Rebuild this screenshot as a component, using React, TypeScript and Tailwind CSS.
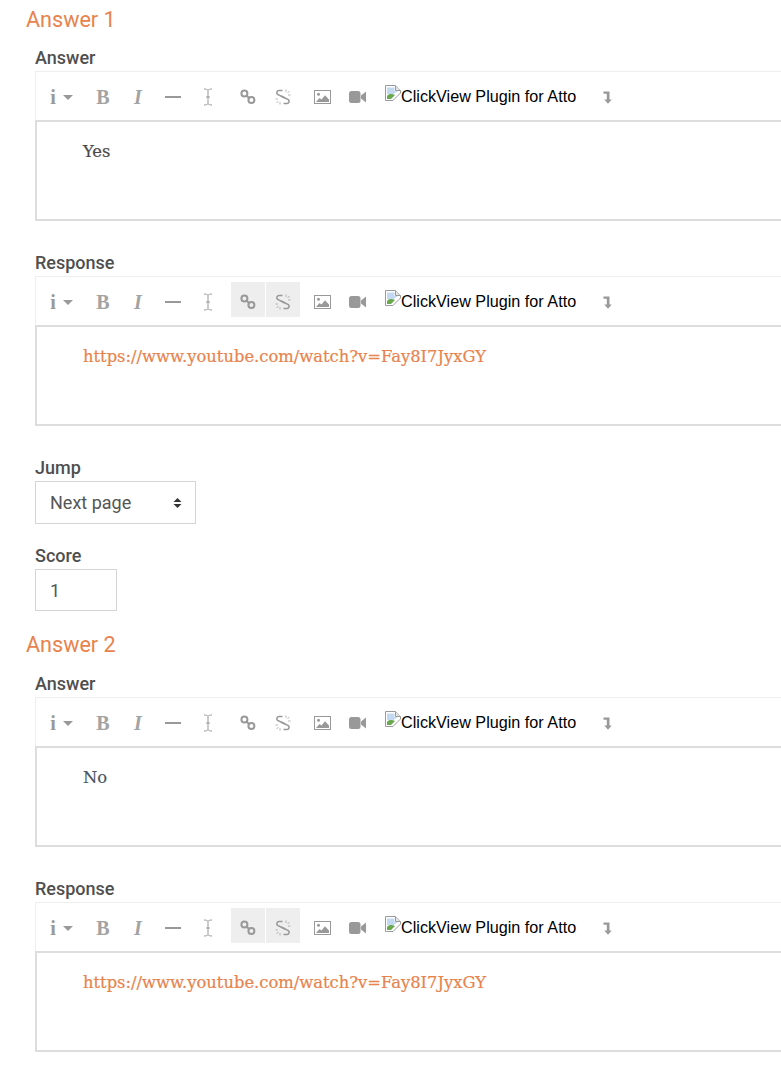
import React from 'react';

const orange = 'text-[#e8834d]';
const labelCls = 'text-[18px] font-medium leading-[20px] text-[#4f4f4f]';

const Btn = ({ active, children }: { active?: boolean; children: React.ReactNode }) => (
  <div className={`flex h-[35px] w-[34px] mr-px items-center justify-center pt-[5px] ${active ? 'bg-[#eeeeee]' : ''}`}>
    {children}
  </div>
);

const LinkIcon = () => (
  <svg width="16" height="16" viewBox="0 0 16 16" fill="none" stroke="#999999" strokeWidth="2">
    <circle cx="4.400" cy="4.600" r="3" />
    <circle cx="11.400" cy="11" r="3" />
    <path d="M6 6.200l3.800 3.400" />
  </svg>
);

const UnlinkIcon = () => (
  <svg width="16" height="16" viewBox="0 0 16 16" fill="none" stroke="#999999" strokeWidth="1.600">
    <path d="M7.500 1.500H4a2.200 2.200 0 0 0-1.400 3.900L10 9" />
    <path d="M6 7l7.300 3.600a2.200 2.200 0 0 1-1.300 3.900H8.500" />
    <path d="M11 0.500v2.500M14.500 2l-2 2M15.500 6h-2.500M0.500 10h2.500M1.500 14l2-2M5 15.500v-2.500" strokeWidth="0.700" />
  </svg>
);

const ImageIcon = () => (
  <svg width="17" height="14" viewBox="0 0 17 14">
    <rect x="0.500" y="0.500" width="16" height="13" fill="#ffffff" stroke="#999999" />
    <circle cx="4.500" cy="4.200" r="1.500" fill="#999999" />
    <path d="M2 12l3.500-4 2 1.600L11 5.200l4 4.400V12z" fill="#999999" />
  </svg>
);

const VideoIcon = () => (
  <svg width="17" height="12" viewBox="0 0 17 12" fill="#999999">
    <rect x="0" y="0" width="11.500" height="12" rx="2.500" />
    <path d="M12 4.500L17 0.500v11L12 7.500z" />
  </svg>
);

const CursorIcon = () => (
  <svg width="10" height="18" viewBox="0 0 10 18" fill="none" stroke="#999999" strokeWidth="1">
    <path d="M1 1c2 0 3.200.4 4 1.400C5.800 1.400 7 1 9 1M5 2.400v13.200M1 17c2 0 3.200-.4 4-1.400.8 1 2 1.400 4 1.400M3 9h4" />
  </svg>
);

const ArrowIcon = () => (
  <svg width="9" height="13" viewBox="0 0 9 13" fill="#999999">
    <path d="M0.500 0.500H6.500V8.500H8.700L5 12.800L1.300 8.500H3.800V2.700H0.500z" />
  </svg>
);

const BrokenImage = () => (
  <svg width="16" height="16" viewBox="0 0 16 16" className="shrink-0 self-start">
    <path d="M0.500 0.500H10.500L15.500 5.500V8L8 15.500H0.500z" fill="#ffffff" stroke="#9a9a9a" />
    <path d="M10.500 0.500V5.500H15.500" fill="#e4e4e4" stroke="#9a9a9a" />
    <path d="M2 2.500H9.500V6H13L7 10L2 9z" fill="#c3d9f2" />
    <path d="M2 14V11C4 8.500 7 8.500 10 10L6 14z" fill="#6aa84f" />
  </svg>
);

const Toolbar = ({ activeLinks }: { activeLinks?: boolean }) => (
  <div className="flex h-[49px] items-start border border-b-0 border-r-0 border-[#eeeeee] pl-[5px] pt-[5px]">
    <div className="mr-[5px] flex h-[35px] w-[40px] items-center justify-center gap-[7px] pl-[1px] pt-[5px] text-[#999999]">
      <span className="font-['Liberation_Serif',serif] text-[20px] font-bold leading-none">i</span>
      <span className="h-0 w-0 border-x-[5px] border-t-[5px] border-x-transparent border-t-[#999999]" />
    </div>
    <div className="mr-[5px] flex">
      <Btn>
        <span className="font-['Liberation_Serif',serif] text-[20px] font-bold leading-none text-[#a3a3a3]">B</span>
      </Btn>
      <Btn>
        <span className="font-['Liberation_Serif',serif] text-[20px] font-bold italic leading-none text-[#a3a3a3]">I</span>
      </Btn>
      <Btn>
        <span className="h-[2px] w-[16px] bg-[#999999]" />
      </Btn>
      <Btn>
        <CursorIcon />
      </Btn>
    </div>
    <div className="mr-[4px] flex">
      <Btn active={activeLinks}>
        <LinkIcon />
      </Btn>
      <Btn active={activeLinks}>
        <UnlinkIcon />
      </Btn>
    </div>
    <div className="mr-[10px] flex">
      <Btn>
        <ImageIcon />
      </Btn>
      <Btn>
        <VideoIcon />
      </Btn>
    </div>
    <div className="mt-[8px] flex h-[22px] w-[205px] items-center font-['Liberation_Sans',sans-serif] text-[16.2px] text-black">
      <BrokenImage />
      <span className="whitespace-nowrap">ClickView Plugin for Atto</span>
    </div>
    <Btn>
      <ArrowIcon />
    </Btn>
  </div>
);

const Editor = ({ label, activeLinks, children }: { label: string; activeLinks?: boolean; children: React.ReactNode }) => (
  <div className="w-[760px]">
    <div className={`h-[23px] ${labelCls}`}>{label}</div>
    <Toolbar activeLinks={activeLinks} />
    <div className="h-[101px] border-2 border-r-0 border-[#dddddd] pl-[46px] pt-[18px] font-['DejaVu_Serif',serif] text-[16.35px] leading-[24px] [-webkit-text-stroke:0.2px]">
      {children}
    </div>
  </div>
);

const Url = () => <span className={orange}>https://www.youtube.com/watch?v=Fay8I7JyxGY</span>;

const AnswerBlock = ({ n, headCls, text, textColor, children }: { n: number; headCls: string; text: string; textColor: string; children?: React.ReactNode }) => (
  <div>
    <h3 className={`-ml-[9px] text-[21.6px] leading-[26px] ${headCls} ${orange}`}>Answer {n}</h3>
    <Editor label="Answer">
      <span className={textColor}>{text}</span>
    </Editor>
    <div className="mt-[32px]">
      <Editor label="Response" activeLinks>
        <Url />
      </Editor>
    </div>
    {children}
  </div>
);

export default function App() {
  return (
    <div className="h-[1070px] w-[781px] overflow-hidden bg-white pl-[35px] pt-[7px] font-['Roboto',sans-serif]">
      <AnswerBlock n={1} headCls="h-[41px]" text="Yes" textColor="text-[#4a4a4a]">
        <div className={`mt-[32px] h-[23px] ${labelCls}`}>Jump</div>
        <div className="flex h-[43px] w-[161px] items-center justify-between border border-[#d5d5d5] pl-[14px] pr-[13px] text-[18px] text-[#555555]">
          <span>Next page</span>
          <svg width="9" height="12" viewBox="0 0 9 12" fill="#333333">
            <path d="M4.500 1L8.500 5H0.500zM4.500 11L0.500 7H8.500z" />
          </svg>
        </div>
        <div className={`mt-[22px] h-[23px] ${labelCls}`}>Score</div>
        <div className="flex h-[42px] w-[82px] items-center border border-[#d5d5d5] pl-[14px] text-[18px] text-[#555555]">1</div>
      </AnswerBlock>
      <div className="mt-[21px]">
        <AnswerBlock n={2} headCls="h-[42px]" text="No" textColor="text-[#4b5563]" />
      </div>
    </div>
  );
}
